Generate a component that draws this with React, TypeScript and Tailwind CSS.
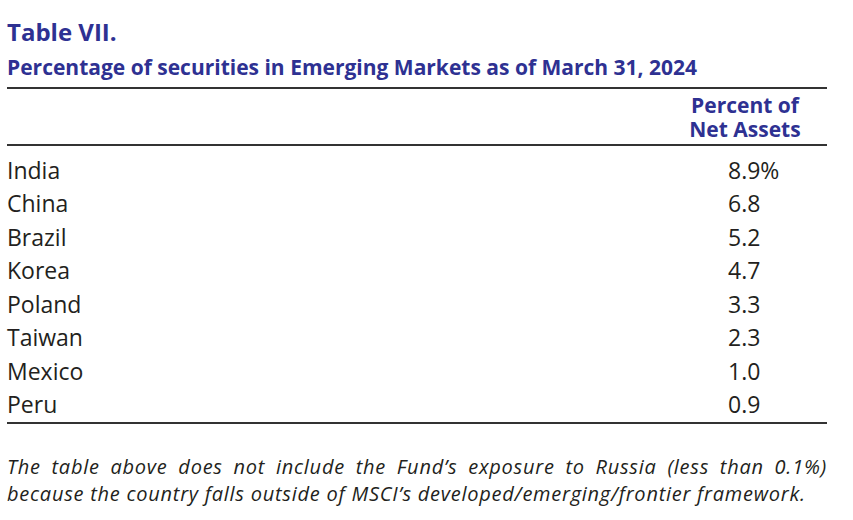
import React from "react";

const rows: [string, string, boolean][] = [
  ["India", "8.9", true],
  ["China", "6.8", false],
  ["Brazil", "5.2", false],
  ["Korea", "4.7", false],
  ["Poland", "3.3", false],
  ["Taiwan", "2.3", false],
  ["Mexico", "1.0", false],
  ["Peru", "0.9", false],
];

export default function App() {
  return (
    <div className="w-[853px] h-[520px] bg-white font-['Open_Sans',sans-serif] text-[#231f20]">
      <div className="pl-[7px] pr-[26px] pt-[16px]">
        <div className="text-[24px] font-bold text-[#2e3192] leading-[32px]">Table VII.</div>
        <div className="text-[21px] font-bold text-[#2e3192] leading-[26px] mt-[6px]">
          Percentage of securities in Emerging Markets as of March 31, 2024
        </div>
        <div className="mt-[7px] h-[2px] bg-[#333333]" />
        <div className="flex justify-end h-[55px] items-center">
          <div className="w-[164px] text-center text-[21px] font-bold text-[#2e3192] leading-[24px]">
            <div>Percent of</div>
            <div>Net Assets</div>
          </div>
        </div>
        <div className="h-[2px] bg-[#333333]" />
        <div className="pt-[7px]">
          {rows.map(([c, v, pct]) => (
            <div key={c} className="flex items-center h-[33.57px] text-[23px]">
              <div className="flex-1">{c}</div>
              <div className="w-[99px]">
                {v}
                {pct ? "%" : ""}
              </div>
            </div>
          ))}
        </div>
        <div className="h-[2px] bg-[#333333]" />
        <div className="mt-[29px] italic text-[20px] leading-[27px] tracking-[0.75px]">
          <div className="text-justify [text-align-last:justify]">
            The table above does not include the Fund’s exposure to Russia (less than 0.1%)
          </div>
          <div>because the country falls outside of MSCI’s developed/emerging/frontier framework.</div>
        </div>
      </div>
    </div>
  );
}
